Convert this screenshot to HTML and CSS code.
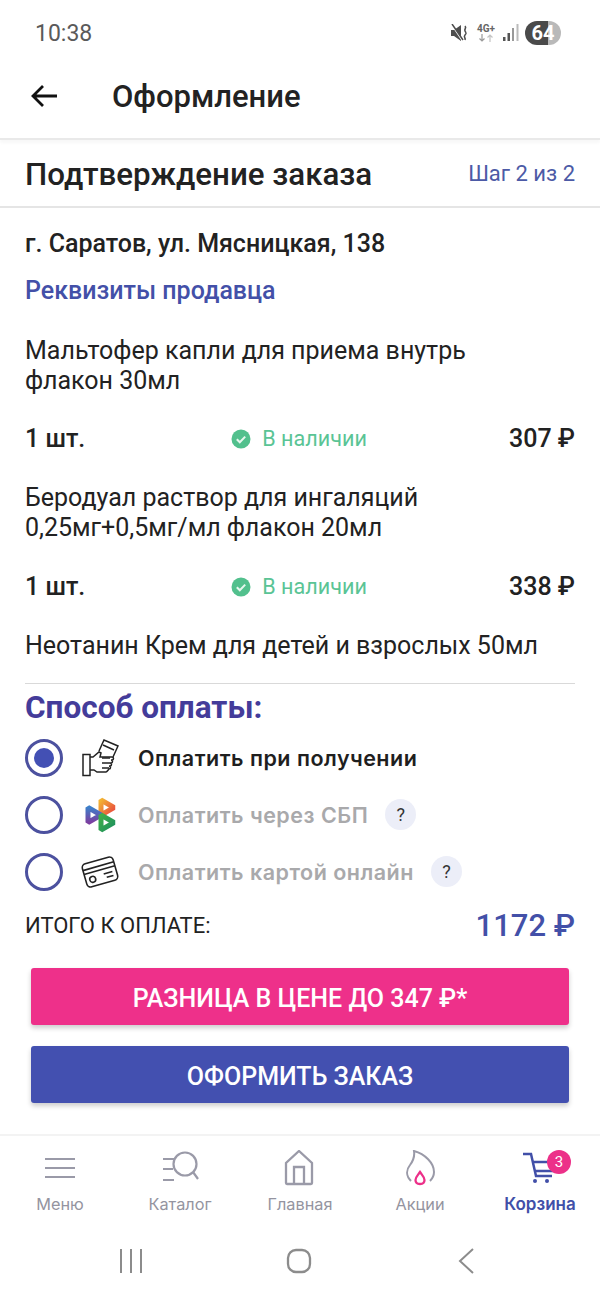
FILE: index.html
```html
<!DOCTYPE html>
<html lang="ru">
<head>
  <meta charset="UTF-8">
  <meta name="viewport" content="width=device-width, initial-scale=1.0">
  <title>Оформление</title>
  <link rel="stylesheet" href="styles.css">
</head>
<body>
  <div class="status">
    <span class="time">10:38</span>
    <div class="status-icons">
      <svg class="mute" width="18" height="18" viewBox="0 0 18 18">
        <path d="M0 6h3l7-5v16l-7-5H0z" fill="#4d4d4d"/>
        <path d="M1 1l10 15" stroke="#fff" stroke-width="1.5"/>
        <path d="M1 0l11 16" stroke="#4d4d4d" stroke-width="1.5"/>
        <path d="M14 2c2 2-1 3 0 5s2 2 0 4 1 3 0 5" stroke="#4d4d4d" stroke-width="1.6" fill="none"/>
      </svg>
      <div class="net">
        <span class="net-label">4G+</span>
        <svg width="18" height="8" viewBox="0 0 18 8">
          <path d="M5 0v7M2.500 4.500L5 7l2.500-2.500" stroke="#9a9a9a" stroke-width="1.200" fill="none"/>
          <path d="M13 8V1M10.500 3.500L13 1l2.500 2.500" stroke="#c4c4c4" stroke-width="1.200" fill="none"/>
        </svg>
      </div>
      <svg class="signal" width="16" height="18" viewBox="0 0 16 18">
        <rect x="0" y="13" width="2.500" height="4" fill="#555"/>
        <rect x="4.500" y="9" width="2.500" height="8" fill="#555"/>
        <rect x="9" y="4" width="2" height="13" fill="#999"/>
        <rect x="13.500" y="0" width="2" height="17" fill="#bbb"/>
      </svg>
      <span class="battery">64</span>
    </div>
  </div>

  <div class="topbar">
    <svg class="back" width="28" height="24" viewBox="0 0 28 24">
      <path d="M27 12H3M13 2L3 12l10 10" stroke="#111" stroke-width="2.800" fill="none"/>
    </svg>
    <h1>Оформление</h1>
  </div>

  <div class="steps">
    <h2>Подтверждение заказа</h2>
    <span class="step-num">Шаг 2 из 2</span>
  </div>

  <div class="content">
    <div class="address">г. Саратов, ул. Мясницкая, 138</div>
    <div class="seller">Реквизиты продавца</div>

    <div class="product first">Мальтофер капли для приема внутрь<br>флакон 30мл</div>
    <div class="qty-row">
      <span class="qty">1 шт.</span>
      <span class="stock">
        <svg width="20" height="20" viewBox="0 0 20 20"><circle cx="10" cy="10" r="9.500" fill="#52c08d"/><path d="M5.800 10.200l3 3 5.400-5.600" stroke="#e6f7ee" stroke-width="2" fill="none"/></svg>
        В наличии
      </span>
      <span class="price">307 ₽</span>
    </div>

    <div class="product">Беродуал раствор для ингаляций<br>0,25мг+0,5мг/мл флакон 20мл</div>
    <div class="qty-row second">
      <span class="qty">1 шт.</span>
      <span class="stock">
        <svg width="20" height="20" viewBox="0 0 20 20"><circle cx="10" cy="10" r="9.500" fill="#52c08d"/><path d="M5.800 10.200l3 3 5.400-5.600" stroke="#e6f7ee" stroke-width="2" fill="none"/></svg>
        В наличии
      </span>
      <span class="price">338 ₽</span>
    </div>

    <div class="product last">Неотанин Крем для детей и взрослых 50мл</div>
    <div class="divider"></div>

    <div class="pay-title">Способ оплаты:</div>
    <div class="pay-list">
      <div class="pay-row active">
        <span class="radio"></span>
        <svg class="pay-icon" width="38" height="38" viewBox="0 0 38 38" fill="none" stroke="#222" stroke-width="1.500">
          <rect x="2" y="15.500" width="7" height="21"/>
          <path d="M9 18h3l6-5 2 1-1 4h12c2 0 2 3 0 3h-1c2 0 2 3 0 3h-1c2 0 2 3 0 3h-1c2 0 2 3 0 3-1 1-2 3-3 3H16l-3-2H9"/>
          <path d="M18 12L23 1l14 6-5 11"/>
          <path d="M22 6l11 5M21 19h8M21 24h8M21 29h7"/>
        </svg>
        <span class="pay-text">Оплатить при получении</span>
      </div>
      <div class="pay-row">
        <span class="radio"></span>
        <svg class="pay-icon" width="38" height="38" viewBox="0 0 38 38" fill="none" stroke-width="5" stroke-linejoin="bevel">
          <defs>
            <linearGradient id="sbpTop" x1="0" y1="0" x2="1" y2="1"><stop offset="0" stop-color="#f2b233"/><stop offset="1" stop-color="#e8413f"/></linearGradient>
            <linearGradient id="sbpLeft" x1="0" y1="0" x2="0" y2="1"><stop offset="0" stop-color="#3d7fc9"/><stop offset="1" stop-color="#7b3fa0"/></linearGradient>
            <linearGradient id="sbpBottom" x1="0" y1="0" x2="1" y2="1"><stop offset="0" stop-color="#3fae49"/><stop offset="1" stop-color="#1c8f5f"/></linearGradient>
          </defs>
          <path d="M20 4l13 7.500L20 19z" stroke="url(#sbpTop)"/>
          <path d="M7 11.500L20 19 7 26.500z" stroke="url(#sbpLeft)"/>
          <path d="M20 19l13 7.500L20 34z" stroke="url(#sbpBottom)"/>
        </svg>
        <span class="pay-text">Оплатить через СБП</span>
        <span class="help">?</span>
      </div>
      <div class="pay-row">
        <span class="radio"></span>
        <svg class="pay-icon" width="38" height="38" viewBox="0 0 38 38" fill="none" stroke="#222" stroke-width="1.600">
          <g transform="rotate(-16 19 19)">
            <rect x="3" y="7" width="32" height="24" rx="4"/>
            <path d="M3 13h32M3 17h32"/>
            <circle cx="10" cy="24" r="3"/>
            <path d="M22 22h9M24 26h7"/>
          </g>
        </svg>
        <span class="pay-text">Оплатить картой онлайн</span>
        <span class="help">?</span>
      </div>
    </div>

    <div class="total">
      <span class="total-label">ИТОГО К ОПЛАТЕ:</span>
      <span class="total-sum">1172 ₽</span>
    </div>
  </div>

  <div class="buttons">
    <button class="btn btn-pink">РАЗНИЦА В ЦЕНЕ ДО 347 ₽*</button>
    <button class="btn btn-blue">ОФОРМИТЬ ЗАКАЗ</button>
  </div>

  <nav class="tabbar">
    <div class="tab">
      <svg width="40" height="36" viewBox="0 0 40 36" stroke="#9a9aa8" stroke-width="2.200" fill="none">
        <path d="M5 9h30M5 18h30M5 27h30"/>
      </svg>
      <span>Меню</span>
    </div>
    <div class="tab">
      <svg width="40" height="36" viewBox="0 0 40 36" stroke="#9a9aa8" stroke-width="2.200" fill="none">
        <circle cx="25" cy="14" r="11.500"/>
        <path d="M33 22l5 7M3 9h11M3 19h10M3 30h11"/>
      </svg>
      <span>Каталог</span>
    </div>
    <div class="tab">
      <svg width="40" height="36" viewBox="0 0 40 36" stroke="#9a9aa8" stroke-width="2.300" fill="none">
        <path d="M7 34a1 1 0 0 1-1-1V13L19 1l13 12v20a1 1 0 0 1-1 1z"/>
        <path d="M14 34V17h10v17"/>
      </svg>
      <span>Главная</span>
    </div>
    <div class="tab">
      <svg width="40" height="36" viewBox="0 0 40 36" fill="none">
        <path d="M11 31C6 26 6 20 10 15c3-4 5-8 4-14 11 3 20 12 20 21 0 4-2 7-4 9" stroke="#9a9aa8" stroke-width="2"/>
        <path d="M20 22c-2 3-4.500 5-4.500 8 0 2.500 2 4 4.500 4s4.500-1.500 4.500-4c0-3-2.500-5-4.500-8z" stroke="#ec3089" stroke-width="2.300"/>
      </svg>
      <span>Акции</span>
    </div>
    <div class="tab current">
      <svg width="40" height="36" viewBox="0 0 40 36" fill="none" stroke="#414fa8" stroke-width="2.500">
        <path d="M3 4h8l5 22h16"/>
        <path d="M13 12h24l-3 9H15"/>
        <circle cx="15" cy="31" r="2" fill="#414fa8" stroke="none"/>
        <circle cx="27" cy="31" r="2" fill="#414fa8" stroke="none"/>
      </svg>
      <span>Корзина</span>
      <span class="badge">3</span>
    </div>
  </nav>

  <div class="sysnav">
    <svg width="26" height="26" viewBox="0 0 26 26" stroke="#8c8c8c" stroke-width="2" fill="none"><path d="M3 1v24M13 1v24M23 1v24"/></svg>
    <svg width="26" height="26" viewBox="0 0 26 26" stroke="#8c8c8c" stroke-width="2.300" fill="none"><rect x="2" y="2" width="22" height="22" rx="8"/></svg>
    <svg width="26" height="26" viewBox="0 0 26 26" stroke="#8c8c8c" stroke-width="2" fill="none"><path d="M19 1L6 13l13 12"/></svg>
  </div>
</body>
</html>
```

FILE: styles.css
```css
body {
  font-family: Roboto, "Liberation Sans", sans-serif;
  background-color: #fff;
  color: #222;
  margin: 0;
  padding: 0;
  width: 600px;
  height: 1299px;
  overflow: hidden;
}

.status {
  display: flex;
  align-items: center;
  justify-content: space-between;
  height: 66px;
  padding: 0 39px 0 35px;
}

.time {
  font-size: 23px;
  color: #5a5a5a;
}

.status-icons {
  display: flex;
  align-items: center;
}

.mute {
  margin-right: 7px;
}

.net {
  display: flex;
  flex-direction: column;
  align-items: center;
  width: 20px;
  margin-right: 7px;
}

.net-label {
  font-size: 10px;
  font-weight: 700;
  line-height: 10px;
  color: #666;
}

.signal {
  margin-right: 6px;
}

.battery {
  width: 36px;
  height: 24px;
  border-radius: 12px;
  background: linear-gradient(to right, #4a4a4a 64%, #b9b9b9 64%);
  color: #fff;
  font-size: 20px;
  font-weight: 700;
  line-height: 24px;
  text-align: center;
}

.topbar {
  display: flex;
  align-items: center;
  height: 74px;
  padding: 0 0 11px 30px;
  box-sizing: border-box;
  border-bottom: 2px solid #e9e9e9;
  box-shadow: 0 3px 3px rgba(0, 0, 0, 0.03);
}

.back {
  margin-bottom: 2px;
}

.topbar h1 {
  margin: 0 0 0 54px;
  font-size: 31px;
  font-weight: 500;
  color: #222;
}

.steps {
  display: flex;
  align-items: center;
  justify-content: space-between;
  height: 68px;
  padding: 3px 25px 0;
  box-sizing: border-box;
  border-bottom: 2px solid #e5e5e5;
}

.steps h2 {
  margin: 0;
  font-size: 31.300px;
  font-weight: 500;
  color: #222;
}

.step-num {
  font-size: 22px;
  color: #4c5aa6;
  margin-bottom: 3px;
}

.content {
  padding: 0 25px;
}

.address {
  margin-top: 21px;
  font-size: 25px;
  font-weight: 500;
  line-height: 30px;
}

.seller {
  margin-top: 17px;
  font-size: 25px;
  font-weight: 500;
  line-height: 30px;
  color: #4350a8;
}

.product {
  margin-top: 30px;
  font-size: 25px;
  line-height: 30px;
}

.product.first {
  margin-top: 30px;
}

.product.last {
  margin-top: 30px;
}

.qty-row {
  position: relative;
  display: flex;
  align-items: center;
  justify-content: space-between;
  height: 30px;
  margin-top: 27px;
}

.qty-row.second {
  margin-top: 28px;
}

.qty,
.price {
  font-size: 25px;
  font-weight: 500;
}

.stock {
  display: flex;
  align-items: center;
  gap: 11px;
  margin-left: 4px;
  padding-top: 1px;
  font-size: 21.600px;
  color: #5ac495;
}

.divider {
  height: 1px;
  margin-top: 22px;
  background-color: #d9d9d9;
}

.pay-title {
  margin-top: 9px;
  font-size: 31.500px;
  font-weight: 700;
  line-height: 30px;
  color: #443c9a;
}

.pay-list {
  display: flex;
  flex-direction: column;
  gap: 18.750px;
  margin-top: 16px;
}

.pay-row {
  display: flex;
  align-items: center;
  height: 38px;
}

.radio {
  box-sizing: border-box;
  display: flex;
  align-items: center;
  justify-content: center;
  width: 38px;
  height: 38px;
  border: 3px solid #4c519f;
  border-radius: 50%;
}

.active .radio::after {
  content: "";
  width: 20px;
  height: 20px;
  border-radius: 50%;
  background-color: #4350b4;
}

.pay-icon {
  margin-left: 18px;
}

.pay-text {
  margin-left: 19px;
  font-family: Inter, "Noto Sans", sans-serif;
  font-size: 21.500px;
  font-weight: 600;
  letter-spacing: 0.5px;
  color: #a9a9ab;
}

.active .pay-text {
  color: #1f1f1f;
}

.help {
  width: 31px;
  height: 31px;
  margin-left: 17px;
  border-radius: 50%;
  background-color: #eceef8;
  color: #333;
  font-size: 18px;
  line-height: 31px;
  text-align: center;
}

.total {
  display: flex;
  align-items: center;
  justify-content: space-between;
  height: 40px;
  margin-top: 14.500px;
}

.total-label {
  font-size: 22px;
  color: #222;
}

.total-sum {
  font-size: 31px;
  font-weight: 500;
  color: #4350a8;
}

.buttons {
  display: flex;
  flex-direction: column;
  gap: 21px;
  padding: 23px 31px 0;
}

.btn {
  height: 57px;
  padding: 4px 0 0;
  border: none;
  border-radius: 3px;
  color: #fff;
  font-family: Roboto, sans-serif;
  font-size: 25px;
  font-weight: 500;
  box-shadow: 0 3px 5px rgba(0, 0, 0, 0.2);
}

.btn-pink {
  background-color: #ee308a;
}

.btn-blue {
  background-color: #4350b0;
}

.tabbar {
  display: grid;
  grid-template-columns: repeat(5, 120px);
  height: 92px;
  margin-top: 31px;
  padding-top: 14px;
  box-sizing: content-box;
  border-top: 2px solid #f3f3f3;
}

.tab {
  position: relative;
  display: flex;
  flex-direction: column;
  align-items: center;
  font-family: Inter, "Noto Sans", sans-serif;
  font-size: 16.300px;
  color: #9494a0;
}

.tab svg {
  margin-bottom: 8px;
}

.tab.current {
  color: #414fa8;
  font-weight: 600;
  font-size: 17px;
}

.badge {
  position: absolute;
  top: 0;
  left: 67px;
  width: 24px;
  height: 24px;
  border-radius: 50%;
  background-color: #ec3089;
  color: #fff;
  font-family: Roboto, sans-serif;
  font-size: 15px;
  font-weight: 400;
  line-height: 24px;
  text-align: center;
}

.sysnav {
  display: grid;
  grid-template-columns: repeat(3, 168px);
  justify-items: center;
  padding: 0 47px;
  margin-top: 6px;
}
```
